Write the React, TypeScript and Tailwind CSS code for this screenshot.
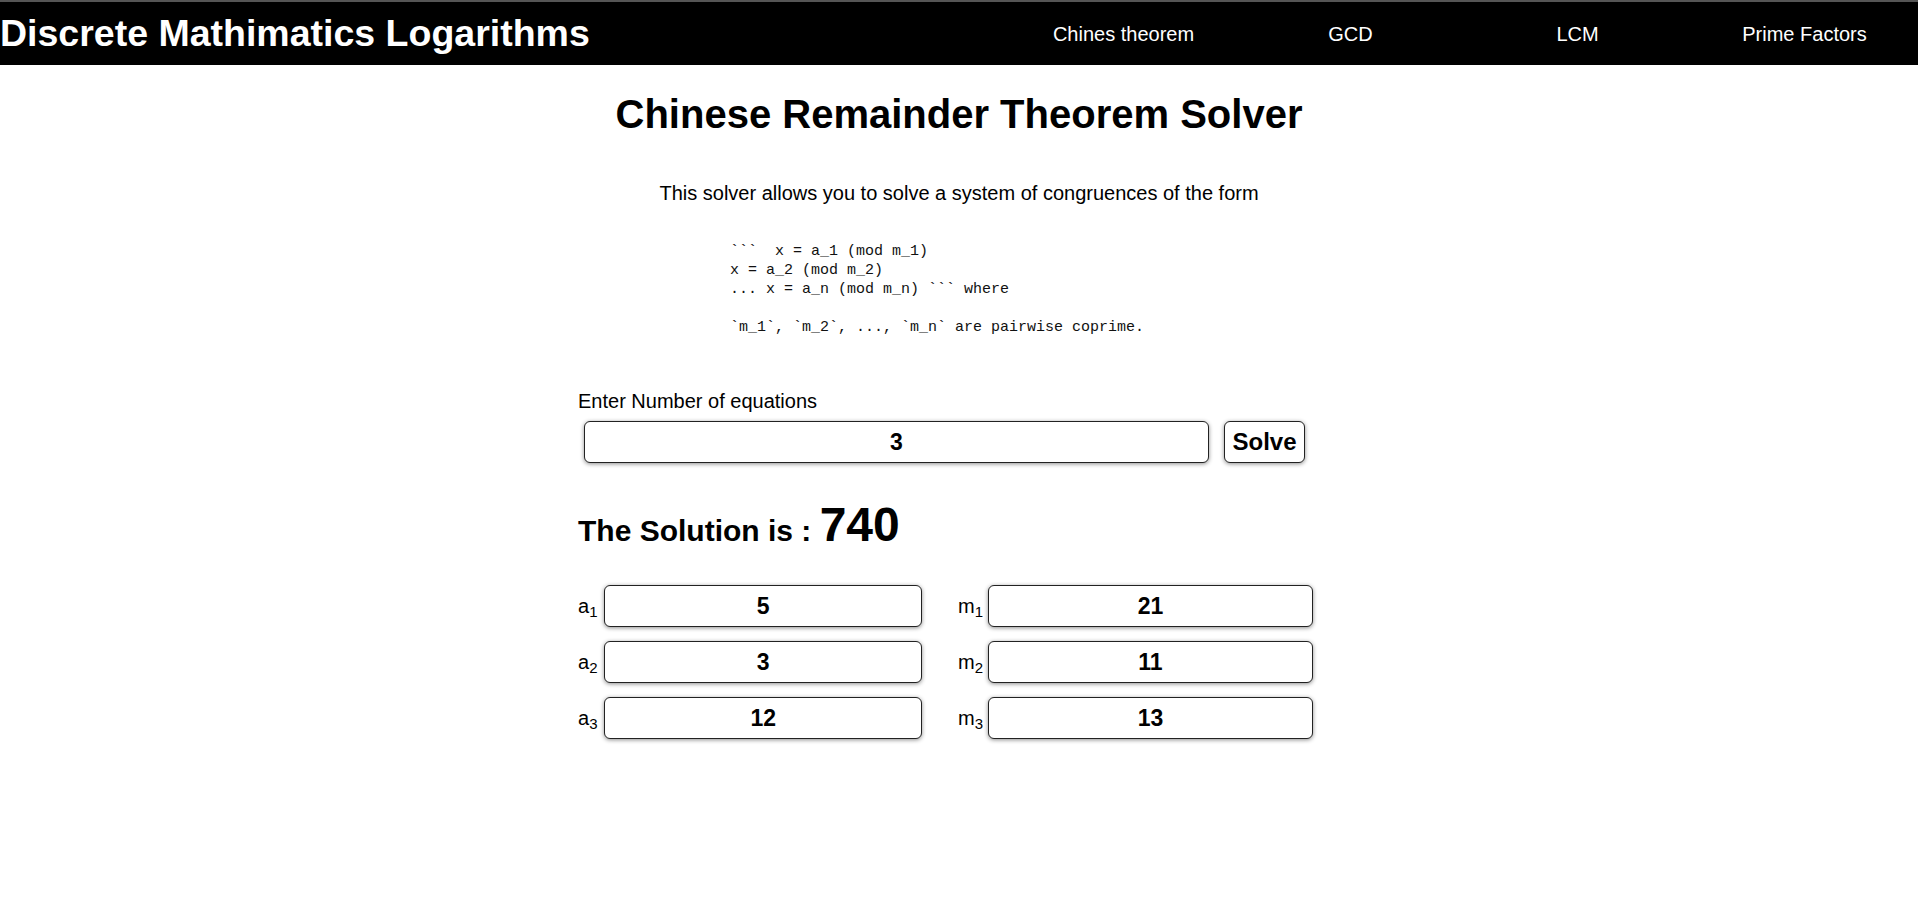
import { useState } from "react";

const navItems = ["Chines theorem", "GCD", "LCM", "Prime Factors"];

function NumInput({ value, className = "" }: { value: string; className?: string }) {
  const [v, setV] = useState(value);
  return (
    <input
      value={v}
      onChange={(e) => setV(e.target.value)}
      className={`h-[42px] rounded-[6px] border-[1.5px] border-[#222] bg-white text-center text-[23px] font-bold text-black shadow-[0_1px_4px_rgba(0,0,0,0.45)] outline-none ${className}`}
    />
  );
}

export default function App() {
  const rows = [
    { a: "5", m: "21" },
    { a: "3", m: "11" },
    { a: "12", m: "13" },
  ];

  return (
    <div className="min-h-[923px] bg-white font-['Liberation_Sans',Arial,sans-serif] text-black">
      <header className="flex h-[65px] items-center justify-between border-t-2 border-[#555] bg-black">
        <h1 className="text-[37.5px] font-bold leading-none text-white">Discrete Mathimatics Logarithms</h1>
        <nav className="flex">
          {navItems.map((item) => (
            <a key={item} href="#" className="w-[227px] text-center text-[20px] text-white">
              {item}
            </a>
          ))}
        </nav>
      </header>

      <main className="mx-auto flex w-[762px] flex-col">
        <h2 className="mt-[26px] text-center text-[40px] font-bold leading-[46px]">
          Chinese Remainder Theorem Solver
        </h2>
        <p className="mt-[45px] text-center text-[20px] leading-[23px]">
          This solver allows you to solve a system of congruences of the form
        </p>
        <pre className="ml-[152px] mt-[37px] font-['Liberation_Mono',monospace] text-[15px] leading-[19px] text-[#111]">
{"```  x = a_1 (mod m_1)\nx = a_2 (mod m_2)\n... x = a_n (mod m_n) ``` where\n\n`m_1`, `m_2`, ..., `m_n` are pairwise coprime."}
        </pre>

        <label className="mt-[53px] text-[20px] leading-[23px]">Enter Number of equations</label>
        <div className="mt-[8px] flex items-center">
          <NumInput value="3" className="ml-[6px] w-[625px]" />
          <button className="ml-[15px] h-[42px] w-[81px] rounded-[6px] border-[1.5px] border-[#222] bg-white text-[24px] font-bold shadow-[0_1px_4px_rgba(0,0,0,0.45)]">
            Solve
          </button>
        </div>

        <h3 className="mt-[38px] text-[30px] font-bold leading-none">
          The Solution is : <span className="text-[48px]">740</span>
        </h3>

        <div className="mt-[36px] grid grid-cols-[344px_355px] gap-x-[36px] gap-y-[14px]">
          {rows.map((r, i) => (
            <div key={i} className="contents">
              <div className="flex items-center gap-[7px]">
                <span className="text-[20px]">
                  a<sub>{i + 1}</sub>
                </span>
                <NumInput value={r.a} className="min-w-0 flex-1" />
              </div>
              <div className="flex items-center gap-[5px]">
                <span className="text-[20px]">
                  m<sub>{i + 1}</sub>
                </span>
                <NumInput value={r.m} className="min-w-0 flex-1" />
              </div>
            </div>
          ))}
        </div>
      </main>
    </div>
  );
}
